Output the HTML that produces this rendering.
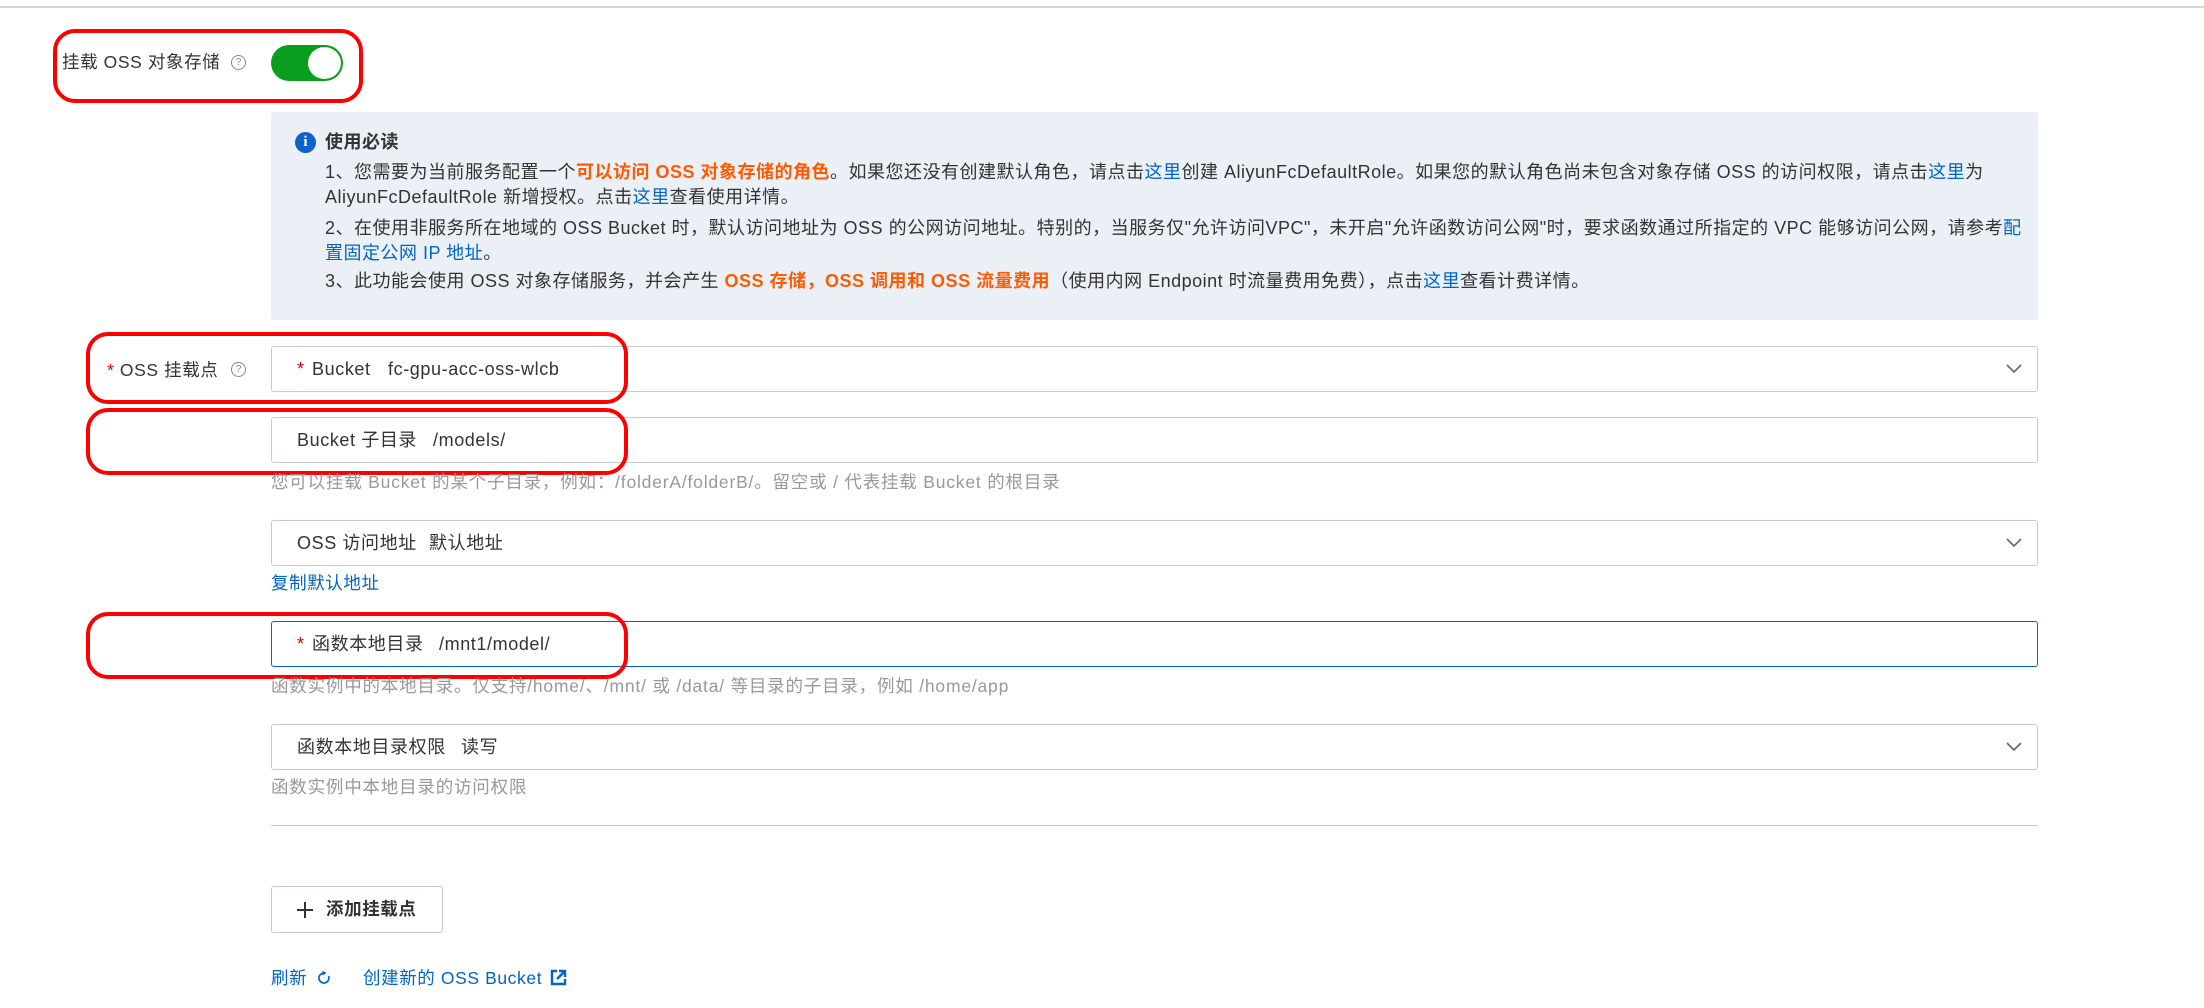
<!DOCTYPE html>
<html><head><meta charset="utf-8">
<style>
*{margin:0;padding:0;box-sizing:border-box}
body{width:2204px;height:1008px;background:#fff;position:relative;overflow:hidden;font-family:"Liberation Sans","Noto Sans CJK SC",sans-serif;color:#333;font-size:18px;letter-spacing:0.6px}
.a{position:absolute;white-space:nowrap}
.line{line-height:24px}
.info{font-size:18px;letter-spacing:0.5px}
.o{color:#ff5a00;font-weight:bold}
.l{color:#0064c8}
.f{position:absolute;left:271px;width:1767px;height:46px;border:1px solid #c6cad1;border-radius:3px;background:#fff}
.f span.t{position:absolute;top:0;line-height:44px;white-space:nowrap}
.r{color:#e60000}
.chev{position:absolute;right:14px;top:14px}
.help{display:inline-block;width:15px;height:15px;border:1px solid #888;border-radius:50%;font-size:10px;line-height:13px;text-align:center;color:#888;letter-spacing:0}
.red{position:absolute;border:4px solid #f00;border-radius:22px}
.hint{color:#999;font-size:17.5px;letter-spacing:0.8px}
</style></head><body>
<div class="a" style="left:0;top:6px;width:2204px;height:2px;background:#d4d7dc"></div>

<div class="a" style="left:62px;top:50px;line-height:24px;font-size:17.5px">挂载 OSS 对象存储</div>
<div class="a help" style="left:231px;top:55px">?</div>
<div class="a" style="left:271px;top:45px;width:72px;height:36px;border-radius:18px;background:#0a9e1f"></div>
<div class="a" style="left:308px;top:47px;width:33px;height:32px;border-radius:50%;background:#fff"></div>
<div class="red" style="left:53px;top:29px;width:310px;height:74px"></div>

<div class="a" style="left:271px;top:112px;width:1767px;height:208px;background:#ebf0f7;border-radius:3px"></div>
<div class="a" style="left:295px;top:132px;width:21px;height:21px;border-radius:50%;background:#0f62c8;color:#fff;font-weight:bold;font-size:15px;line-height:21px;text-align:center;font-family:'Liberation Serif',serif;letter-spacing:0">i</div>
<div class="a line info" style="left:325px;top:130px;font-weight:bold">使用必读</div>
<div class="a line info" style="left:325px;top:160px">1、您需要为当前服务配置一个<span class="o">可以访问 OSS 对象存储的角色</span>。如果您还没有创建默认角色，请点击<span class="l">这里</span>创建 AliyunFcDefaultRole。如果您的默认角色尚未包含对象存储 OSS 的访问权限，请点击<span class="l">这里</span>为</div>
<div class="a line info" style="left:325px;top:185px">AliyunFcDefaultRole 新增授权。点击<span class="l">这里</span>查看使用详情。</div>
<div class="a line info" style="left:325px;top:216px">2、在使用非服务所在地域的 OSS Bucket 时，默认访问地址为 OSS 的公网访问地址。特别的，当服务仅"允许访问VPC"，未开启"允许函数访问公网"时，要求函数通过所指定的 VPC 能够访问公网，请参考<span class="l">配</span></div>
<div class="a line info" style="left:325px;top:241px"><span class="l">置固定公网 IP 地址</span>。</div>
<div class="a line info" style="left:325px;top:269px">3、此功能会使用 OSS 对象存储服务，并会产生 <span class="o">OSS 存储，OSS 调用和 OSS 流量费用</span>（使用内网 Endpoint 时流量费用免费），点击<span class="l">这里</span>查看计费详情。</div>

<div class="a" style="left:107px;top:358px;line-height:24px;font-size:17.5px"><span class="r">*</span> OSS 挂载点</div>
<div class="a help" style="left:231px;top:362px">?</div>
<div class="f" style="top:346px"><span class="t" style="left:25px"><span class="r">*</span></span><span class="t" style="left:40px">Bucket</span><span class="t" style="left:116px">fc-gpu-acc-oss-wlcb</span>
<svg class="chev" width="18" height="16" viewBox="0 0 18 16"><path d="M2 4l7 7 7-7" fill="none" stroke="#666" stroke-width="1.6"/></svg></div>
<div class="red" style="left:86px;top:332px;width:542px;height:72px"></div>

<div class="f" style="top:417px"><span class="t" style="left:25px">Bucket 子目录</span><span class="t" style="left:161px">/models/</span></div>
<div class="red" style="left:86px;top:408px;width:542px;height:67px"></div>
<div class="a hint" style="left:271px;top:470px;line-height:24px">您可以挂载 Bucket 的某个子目录，例如：/folderA/folderB/。留空或 / 代表挂载 Bucket 的根目录</div>

<div class="f" style="top:520px"><span class="t" style="left:25px">OSS 访问地址</span><span class="t" style="left:157px">默认地址</span>
<svg class="chev" width="18" height="16" viewBox="0 0 18 16"><path d="M2 4l7 7 7-7" fill="none" stroke="#666" stroke-width="1.6"/></svg></div>
<div class="a l" style="left:271px;top:571px;line-height:24px;font-size:17.5px">复制默认地址</div>

<div class="f" style="top:621px;border-color:#0064c8"><span class="t" style="left:25px"><span class="r">*</span></span><span class="t" style="left:40px">函数本地目录</span><span class="t" style="left:167px">/mnt1/model/</span></div>
<div class="red" style="left:86px;top:612px;width:542px;height:67px"></div>
<div class="a hint" style="left:271px;top:674px;line-height:24px">函数实例中的本地目录。仅支持/home/、/mnt/ 或 /data/ 等目录的子目录，例如 /home/app</div>

<div class="f" style="top:724px"><span class="t" style="left:25px">函数本地目录权限</span><span class="t" style="left:189px">读写</span>
<svg class="chev" width="18" height="16" viewBox="0 0 18 16"><path d="M2 4l7 7 7-7" fill="none" stroke="#666" stroke-width="1.6"/></svg></div>
<div class="a hint" style="left:271px;top:775px;line-height:24px">函数实例中本地目录的访问权限</div>

<div class="a" style="left:271px;top:825px;width:1767px;height:1px;background:#c6cad1"></div>

<div class="a" style="left:271px;top:886px;width:172px;height:47px;border:1px solid #c6cad1;border-radius:3px;background:#fff"></div>
<svg class="a" style="left:296px;top:901px" width="18" height="18" viewBox="0 0 18 18"><path d="M9 1v16M1 9h16" stroke="#333" stroke-width="2"/></svg>
<div class="a" style="left:326px;top:897px;line-height:24px;font-weight:bold;font-size:17.5px">添加挂载点</div>

<div class="a l" style="left:271px;top:966px;line-height:24px;font-size:17.5px">刷新</div>
<svg class="a" style="left:317px;top:971px" width="14" height="14" viewBox="0 0 14 14"><path d="M11.5 5A5 5 0 1 1 7 2" fill="none" stroke="#0064c8" stroke-width="1.6"/><path d="M5.5 0.5L8 2 5.5 3.8" fill="none" stroke="#0064c8" stroke-width="1.5"/></svg>
<div class="a l" style="left:363px;top:966px;line-height:24px;font-size:17.5px">创建新的 OSS Bucket</div>
<svg class="a" style="left:550px;top:969px" width="17" height="17" viewBox="0 0 17 17"><path d="M7 2H2v13h13v-5" fill="none" stroke="#0064c8" stroke-width="2.4"/><path d="M9 2h6v6M15 2L7 10" fill="none" stroke="#0064c8" stroke-width="2.4"/></svg>
</body></html>
